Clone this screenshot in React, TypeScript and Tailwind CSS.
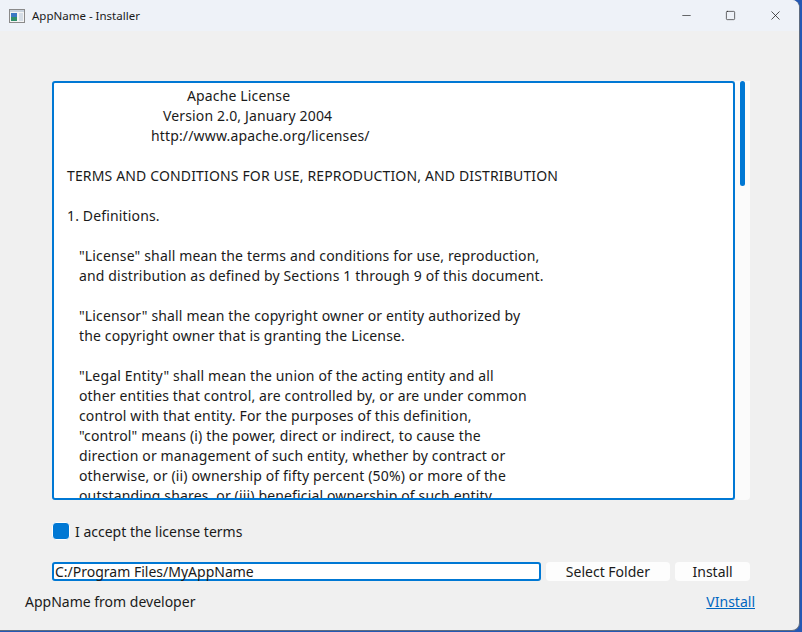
import React from 'react';
import { Minus, Square, X } from 'lucide-react';

const LICENSE_LINES: { text: string; indent: string }[] = [
  { text: 'Apache License', indent: 'pl-[133px]' },
  { text: 'Version 2.0, January 2004', indent: 'pl-[109px]' },
  { text: 'http://www.apache.org/licenses/', indent: 'pl-[97px]' },
  { text: '', indent: '' },
  { text: 'TERMS AND CONDITIONS FOR USE, REPRODUCTION, AND DISTRIBUTION', indent: 'pl-[13px]' },
  { text: '', indent: '' },
  { text: '1. Definitions.', indent: 'pl-[13px]' },
  { text: '', indent: '' },
  { text: '"License" shall mean the terms and conditions for use, reproduction,', indent: 'pl-[25px]' },
  { text: 'and distribution as defined by Sections 1 through 9 of this document.', indent: 'pl-[25px]' },
  { text: '', indent: '' },
  { text: '"Licensor" shall mean the copyright owner or entity authorized by', indent: 'pl-[25px]' },
  { text: 'the copyright owner that is granting the License.', indent: 'pl-[25px]' },
  { text: '', indent: '' },
  { text: '"Legal Entity" shall mean the union of the acting entity and all', indent: 'pl-[25px]' },
  { text: 'other entities that control, are controlled by, or are under common', indent: 'pl-[25px]' },
  { text: 'control with that entity. For the purposes of this definition,', indent: 'pl-[25px]' },
  { text: '"control" means (i) the power, direct or indirect, to cause the', indent: 'pl-[25px]' },
  { text: 'direction or management of such entity, whether by contract or', indent: 'pl-[25px]' },
  { text: 'otherwise, or (ii) ownership of fifty percent (50%) or more of the', indent: 'pl-[25px]' },
  { text: 'outstanding shares, or (iii) beneficial ownership of such entity.', indent: 'pl-[25px]' },
  { text: '', indent: '' },
];

const AppIcon: React.FC = () => (
  <svg width="16" height="14" viewBox="0 0 16 14">
    <rect x="0.5" y="0.5" width="15" height="13" fill="#f4f4f4" stroke="#8a8a8a" />
    <rect x="1" y="1" width="14" height="2" fill="#c9d3de" />
    <rect x="2" y="4" width="6" height="8" fill="#2f8f6a" />
    <rect x="2" y="4" width="6" height="4" fill="#3a78c4" />
    <rect x="10" y="4" width="4" height="8" fill="#d5dde6" />
  </svg>
);

export default function App() {
  return (
    <div className="w-[802px] h-[632px] bg-[#2458b4] overflow-hidden" style={{ fontFamily: '"Noto Sans", "Open Sans", sans-serif' }}>
      <div className="w-[800px] h-[631px] bg-[#f0f0f0] rounded-r-[8px] border-r border-b border-[#5d6b80] flex flex-col overflow-hidden">
        {/* title bar */}
        <div className="h-[31px] bg-[#eef2f8] flex items-center shrink-0">
          <div className="pl-[9px] pr-[7px] flex items-center">
            <AppIcon />
          </div>
          <span className="text-[11.5px] text-[#1a1a1a]">AppName - Installer</span>
          <div className="ml-auto flex items-center h-full pr-[1px]">
            <div className="w-[46px] h-full flex items-center justify-center pl-[6px]">
              <Minus size={13} strokeWidth={1.2} className="text-[#1a1a1a]" />
            </div>
            <div className="w-[46px] h-full flex items-center justify-center pl-[2px]">
              <Square size={11} strokeWidth={1.4} className="text-[#1a1a1a]" />
            </div>
            <div className="w-[46px] h-full flex items-center justify-center">
              <X size={15} strokeWidth={1.2} className="text-[#1a1a1a]" />
            </div>
          </div>
        </div>

        {/* body */}
        <div className="flex-1 flex flex-col pl-[52px] pr-[49px] pt-[50px]">
          <div className="flex h-[419px]">
            <div className="flex-1 bg-white border-2 border-[#0078d4] rounded-[3px] overflow-hidden pt-[3px]">
              {LICENSE_LINES.map((line, i) => (
                <div key={i} className={`h-[20px] leading-[20px] text-[14px] tracking-[0.15px] text-[#1a1a1a] whitespace-pre ${line.indent}`}>
                  {line.text}
                </div>
              ))}
            </div>
            <div className="w-[15px] bg-[#fbfbfb] rounded-b-[4px] pl-[5px]">
              <div className="w-[5px] h-[105px] bg-[#0078d4] rounded-full" />
            </div>
          </div>

          <div className="flex items-center mt-[22px] h-[18px]">
            <div className="w-[18px] h-[18px] rounded-[4px] bg-[#0078d4] border border-white" />
            <span className="ml-[5px] text-[14px] text-[#1a1a1a]">I accept the license terms</span>
          </div>

          <div className="flex items-center mt-[22px] h-[19px]">
            <div className="w-[490px] h-[19px] bg-white border-2 border-[#0078d4] rounded-[3px] flex items-center pl-[1px]">
              <span className="text-[14px] text-[#1a1a1a] leading-none">C:/Program Files/MyAppName</span>
            </div>
            <button className="ml-[5px] w-[125px] h-[19px] bg-[#fdfdfd] rounded-[4px] text-[14px] text-[#1a1a1a] flex items-center justify-center">
              Select Folder
            </button>
            <button className="ml-[5px] w-[75px] h-[19px] bg-[#fdfdfd] rounded-[4px] text-[14px] text-[#1a1a1a] flex items-center justify-center">
              Install
            </button>
          </div>
        </div>

        <div className="flex items-center justify-between pl-[25px] pr-[44px] pb-[17px] h-[40px] shrink-0">
          <span className="text-[14px] text-[#1a1a1a]">AppName from developer</span>
          <a className="text-[14px] text-[#0067c0] underline">VInstall</a>
        </div>
      </div>
    </div>
  );
}
